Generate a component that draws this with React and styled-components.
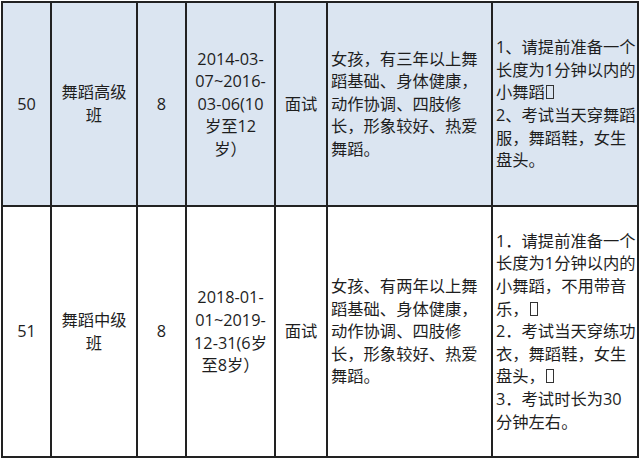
import React from 'react';
import styled, { createGlobalStyle } from 'styled-components';

const GlobalStyle = createGlobalStyle`
  html, body {
    margin: 0;
    padding: 0;
    background: #ffffff;
  }
  body {
    font-family: "Open Sans", "Noto Sans CJK SC", sans-serif;
  }
`;

const Sheet = styled.div`
  display: grid;
  grid-template-columns: 49px 86px 49px 89px 52px 165px 146px;
  width: max-content;
  margin: 1px 0 0 1px;
  border-left: 2px solid #222;
  border-top: 2px solid #222;
  color: #1e1e1e;
  font-size: 16.3px;
  line-height: 22.6px;
  text-spacing-trim: space-all;
`;

const Cell = styled.div`
  display: flex;
  flex-direction: column;
  justify-content: center;
  align-items: ${(p) => (p.$left ? 'flex-start' : 'center')};
  text-align: ${(p) => (p.$left ? 'left' : 'center')};
  height: ${(p) => p.$height}px;
  box-sizing: border-box;
  padding: 0 ${(p) => (p.$left ? '3px' : '0')};
  border-right: 2px solid #222;
  border-bottom: 2px solid #222;
  background: ${(p) => (p.$shaded ? '#dbe5f1' : '#ffffff')};
  overflow: hidden;
`;

const Line = styled.span`
  display: block;
  white-space: nowrap;
`;

const Tofu = styled.span`
  display: inline-block;
  width: 6px;
  height: 12px;
  margin-left: 1px;
  border: 1.5px solid #333;
  vertical-align: -1px;
`;

const rows = [
  {
    shaded: true,
    height: 204,
    no: '50',
    name: ['舞蹈高级', '班'],
    count: '8',
    age: ['2014-03-', '07~2016-', '03-06(10', '岁至12', '岁）'],
    method: '面试',
    req: ['女孩，有三年以上舞', '蹈基础、身体健康，', '动作协调、四肢修', '长，形象较好、热爱', '舞蹈。'],
    note: [
      ['1、请提前准备一个'],
      ['长度为1分钟以内的'],
      ['小舞蹈', true],
      ['2、考试当天穿舞蹈'],
      ['服，舞蹈鞋，女生'],
      ['盘头。'],
    ],
  },
  {
    shaded: false,
    height: 251,
    no: '51',
    name: ['舞蹈中级', '班'],
    count: '8',
    age: ['2018-01-', '01~2019-', '12-31(6岁', '至8岁）'],
    method: '面试',
    req: ['女孩、有两年以上舞', '蹈基础、身体健康，', '动作协调、四肢修', '长，形象较好、热爱', '舞蹈。'],
    note: [
      ['1．请提前准备一个'],
      ['长度为1分钟以内的'],
      ['小舞蹈，不用带音'],
      ['乐，', true],
      ['2．考试当天穿练功'],
      ['衣，舞蹈鞋，女生'],
      ['盘头，', true],
      ['3．考试时长为30'],
      ['分钟左右。'],
    ],
  },
];

const Lines = ({ items }) => items.map((t, i) => <Line key={i}>{t}</Line>);

const App = () => (
  <>
    <GlobalStyle />
    <Sheet>
      {rows.map((r) => (
        <React.Fragment key={r.no}>
          <Cell $shaded={r.shaded} $height={r.height}>{r.no}</Cell>
          <Cell $shaded={r.shaded} $height={r.height}><Lines items={r.name} /></Cell>
          <Cell $shaded={r.shaded} $height={r.height}>{r.count}</Cell>
          <Cell $shaded={r.shaded} $height={r.height}><Lines items={r.age} /></Cell>
          <Cell $shaded={r.shaded} $height={r.height}>{r.method}</Cell>
          <Cell $shaded={r.shaded} $height={r.height} $left><Lines items={r.req} /></Cell>
          <Cell $shaded={r.shaded} $height={r.height} $left>
            {r.note.map(([text, box], i) => (
              <Line key={i}>
                {text}
                {box && <Tofu />}
              </Line>
            ))}
          </Cell>
        </React.Fragment>
      ))}
    </Sheet>
  </>
);

export default App;
